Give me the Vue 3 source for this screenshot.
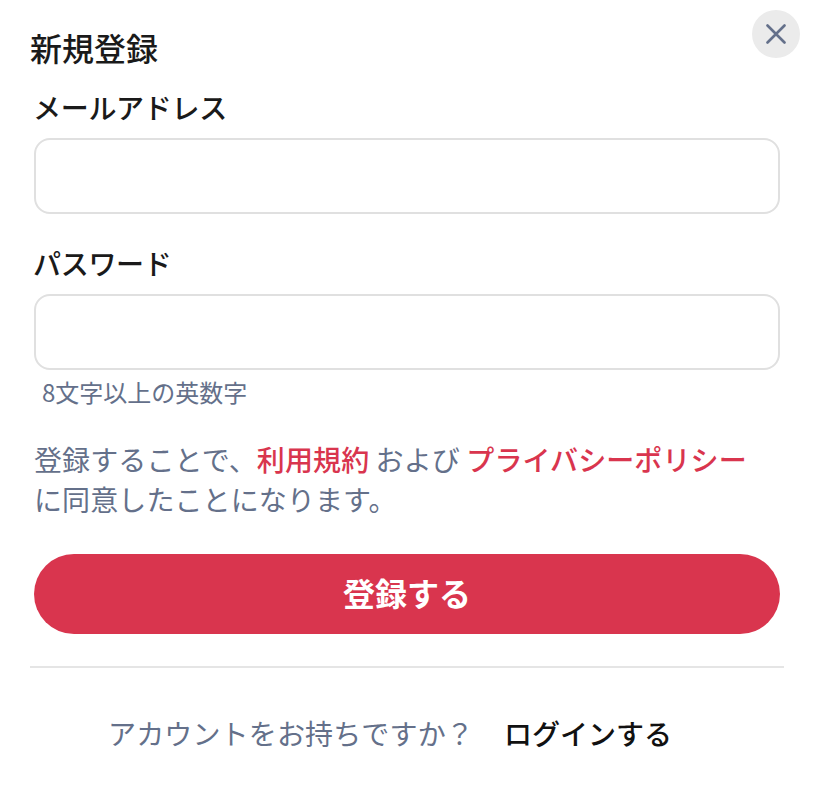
<script setup>
</script>

<template>
  <div class="modal">
    <button class="close" aria-label="閉じる">
      <svg width="20" height="20" viewBox="0 0 20 20" fill="none" stroke="#64708a" stroke-width="2.6" stroke-linecap="round">
        <path d="M1.5 1.5L18.5 18.5M18.5 1.5L1.5 18.5" />
      </svg>
    </button>
    <h1 class="title">新規登録</h1>
    <form class="form" @submit.prevent>
      <label class="label">メールアドレス</label>
      <input class="input" type="email" />
      <label class="label second">パスワード</label>
      <input class="input" type="password" />
      <p class="hint">8文字以上の英数字</p>
      <p class="terms">登録することで、<a class="link">利用規約</a> および <a class="link">プライバシーポリシー</a><br />に同意したことになります。</p>
      <button class="submit" type="submit">登録する</button>
    </form>
    <hr class="divider" />
    <div class="footer">
      <span class="question">アカウントをお持ちですか？</span>
      <a class="login">ログインする</a>
    </div>
  </div>
</template>

<style scoped>
.modal {
  position: relative;
  width: 816px;
  height: 788px;
  box-sizing: border-box;
  padding: 28px 32px 0 30px;
  background: #fff;
  font-family: "Noto Sans CJK JP", "Liberation Sans", sans-serif;
  color: #1a1a1a;
}
.close {
  position: absolute;
  top: 10px;
  right: 16px;
  width: 48px;
  height: 48px;
  border: 0;
  border-radius: 50%;
  background: #ebebeb;
  display: flex;
  align-items: center;
  justify-content: center;
  padding: 0;
}
.title {
  margin: 0;
  font-size: 32px;
  line-height: 38px;
  font-weight: 500;
}
.form {
  display: flex;
  flex-direction: column;
  padding: 21px 4px 0;
}
.label {
  font-size: 28px;
  line-height: 40px;
  font-weight: 500;
  letter-spacing: -0.3px;
  margin-left: -1px;
}
.label.second {
  margin-top: 29px;
}
.input {
  height: 76px;
  box-sizing: border-box;
  border: 2px solid #e0e0e0;
  border-radius: 16px;
  margin-top: 11px;
  background: #fff;
}
.hint {
  margin: 4px 0 0 8px;
  font-size: 24px;
  line-height: 36px;
  color: #64708a;
}
.terms {
  margin: 29px 0 0;
  font-size: 28px;
  line-height: 40px;
  letter-spacing: 0.1px;
  color: #64708a;
}
.link {
  color: #d9354e;
  font-weight: 500;
}
.submit {
  margin-top: 35px;
  height: 80px;
  padding: 0 0 5px;
  border: 0;
  border-radius: 40px;
  background: #d9354e;
  color: #fff;
  font-family: inherit;
  font-size: 32px;
  font-weight: 700;
}
.divider {
  margin: 32px 0 0;
  border: 0;
  border-top: 2px solid #e5e5e5;
}
.footer {
  margin-top: 45px;
  padding-right: 34px;
  display: flex;
  justify-content: center;
  gap: 30px;
  font-size: 28px;
  line-height: 40px;
}
.question {
  color: #64708a;
  letter-spacing: 0.15px;
}
.login {
  color: #111;
  font-weight: 500;
}
</style>
